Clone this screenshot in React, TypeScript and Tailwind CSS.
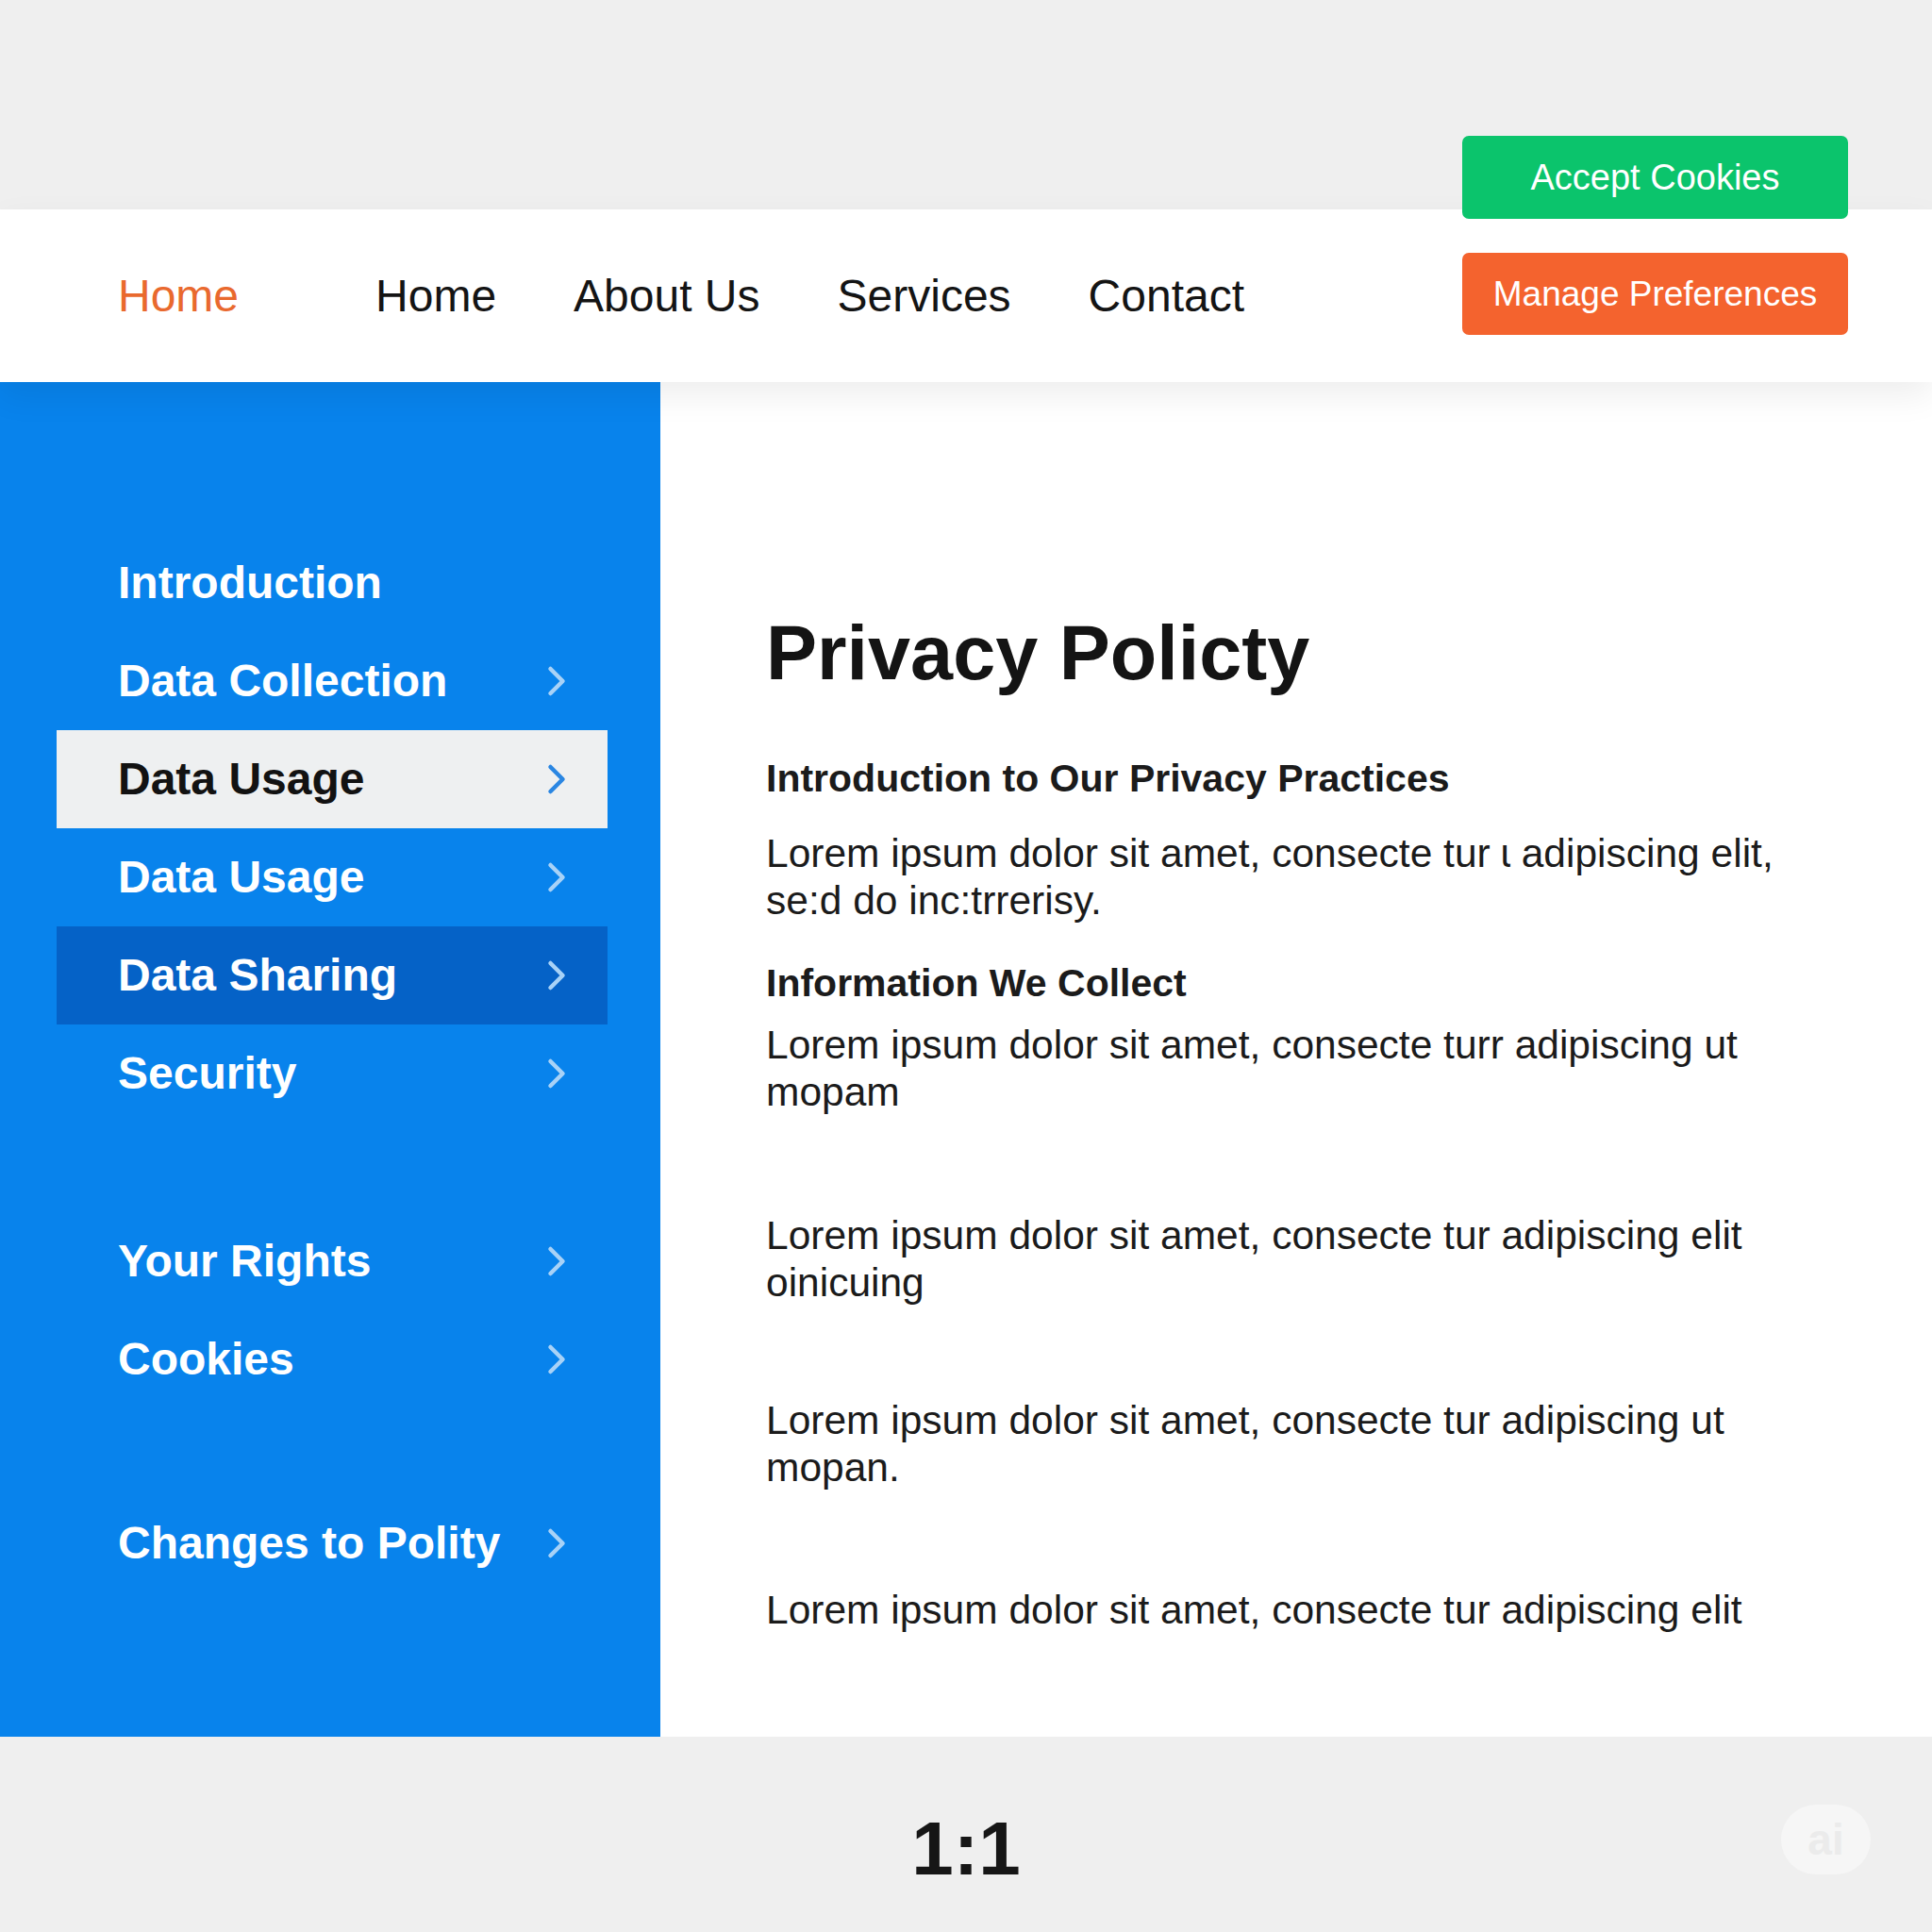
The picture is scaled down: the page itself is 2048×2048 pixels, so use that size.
import React from "react";

type NavItem = { label: string; chevron?: boolean; variant?: "light" | "dark" };

const sections: (NavItem | "gap")[] = [
  { label: "Introduction" },
  { label: "Data Collection", chevron: true },
  { label: "Data Usage", chevron: true, variant: "light" },
  { label: "Data Usage", chevron: true },
  { label: "Data Sharing", chevron: true, variant: "dark" },
  { label: "Security", chevron: true },
  "gap",
  { label: "Your Rights", chevron: true },
  { label: "Cookies", chevron: true },
  "gap",
  { label: "Changes to Polity", chevron: true },
];

// chevron drawn by hand, lucide's is too short for this
const Chevron = ({ light }: { light?: boolean }) => (
  <svg width="20" height="34" viewBox="0 0 20 34" fill="none" className="shrink-0">
    <path
      d="M3.5 4 L16.5 17 L3.5 30"
      stroke={light ? "#2a86e2" : "#a8d2f7"}
      strokeWidth="4.5"
      strokeLinecap="round"
      strokeLinejoin="round"
    />
  </svg>
);

const SideRow = ({ item }: { item: NavItem }) => {
  const bg =
    item.variant === "light" ? "bg-[#eef0f1] text-[#121212]" : item.variant === "dark" ? "bg-[#0562c7] text-white" : "text-white";
  return (
    <div className={`ml-[60px] mr-[56px] h-[104px] flex items-center justify-between pl-[65px] pr-[44px] ${bg}`}>
      <span className="text-[48px] font-bold leading-none whitespace-nowrap">{item.label}</span>
      {item.chevron && <Chevron light={item.variant === "light"} />}
    </div>
  );
};

const paragraphs: { lines: string[]; mt: string }[] = [
  { lines: ["Lorem ipsum dolor sit amet, consecte turr adipiscing ut", "mopam"], mt: "mt-[17px]" },
  { lines: ["Lorem ipsum dolor sit amet, consecte tur adipiscing elit", "oinicuing"], mt: "mt-[102px]" },
  { lines: ["Lorem ipsum dolor sit amet, consecte tur adipiscing ut", "mopan."], mt: "mt-[96px]" },
  { lines: ["Lorem ipsum dolor sit amet, consecte tur adipiscing elit"], mt: "mt-[101px]" },
];

export default function App() {
  return (
    <div className="w-[2048px] h-[2048px] bg-[#efefef] flex flex-col font-['Liberation_Sans',Arial,sans-serif]">
      {/* header */}
      <div className="relative h-[405px] shrink-0 flex flex-col z-10">
        <div className="h-[222px] bg-[#efefef]" />
        <nav className="h-[183px] bg-white flex items-center pl-[125px] shadow-[0_14px_34px_rgba(0,0,0,0.07)]">
          <a className="text-[48px] text-[#e9692e] leading-none">Home</a>
          <div className="ml-[145px] flex items-center gap-[82px] text-[48px] text-[#141414] leading-none">
            <a>Home</a>
            <a>About Us</a>
            <a>Services</a>
            <a>Contact</a>
          </div>
        </nav>

        {/* cookie buttons sit over the gray strip */}
        <div className="absolute right-[89px] top-[144px] w-[409px] flex flex-col gap-[36px]">
          <button className="h-[88px] rounded-[7px] bg-[#0bc46c] text-white text-[38px] leading-none">
            Accept Cookies
          </button>
          <button className="h-[87px] rounded-[7px] bg-[#f4632e] text-white text-[37px] leading-none">
            Manage Preferences
          </button>
        </div>
      </div>

      {/* main */}
      <div className="h-[1436px] shrink-0 flex">
        <aside className="w-[700px] shrink-0 bg-[#0883ec] pt-[161px]">
          {sections.map((s, i) =>
            s === "gap" ? (
              <div key={i} className={i === 6 ? "h-[95px]" : "h-[91px]"} />
            ) : (
              <SideRow key={i} item={s} />
            )
          )}
        </aside>

        <main className="flex-1 bg-white pl-[112px] pt-[247px] text-[#1b1b1b]">
          <h1 className="text-[81px] font-bold leading-none text-[#141414]">Privacy Policty</h1>

          <h2 className="mt-[68px] text-[41px] font-bold leading-[48px]">Introduction to Our Privacy Practices</h2>
          <p className="mt-[31px] text-[42.5px] leading-[50px]">
            <span className="block whitespace-nowrap">Lorem ipsum dolor sit amet, consecte tur ɩ adipiscing elit,</span>
            <span className="block whitespace-nowrap">se:d do inc:trrerisy.</span>
          </p>

          <h2 className="mt-[38px] text-[41px] font-bold leading-[48px]">Information We Collect</h2>
          {paragraphs.map((p, i) => (
            <p key={i} className={`${p.mt} text-[42.5px] leading-[50px]`}>
              {p.lines.map((l, j) => (
                <span key={j} className="block whitespace-nowrap">
                  {l}
                </span>
              ))}
            </p>
          ))}
        </main>
      </div>

      {/* footer */}
      <div className="relative flex-1 flex items-center justify-center pt-[30px]">
        <span className="text-[80px] font-bold leading-none text-[#161616]">1:1</span>
        <div className="absolute right-[65px] top-[72px] w-[95px] h-[74px] rounded-full bg-[#f6f6f6] flex items-center justify-center">
          <span className="text-[46px] font-bold leading-none text-[#ebebeb]">ai</span>
        </div>
      </div>
    </div>
  );
}
